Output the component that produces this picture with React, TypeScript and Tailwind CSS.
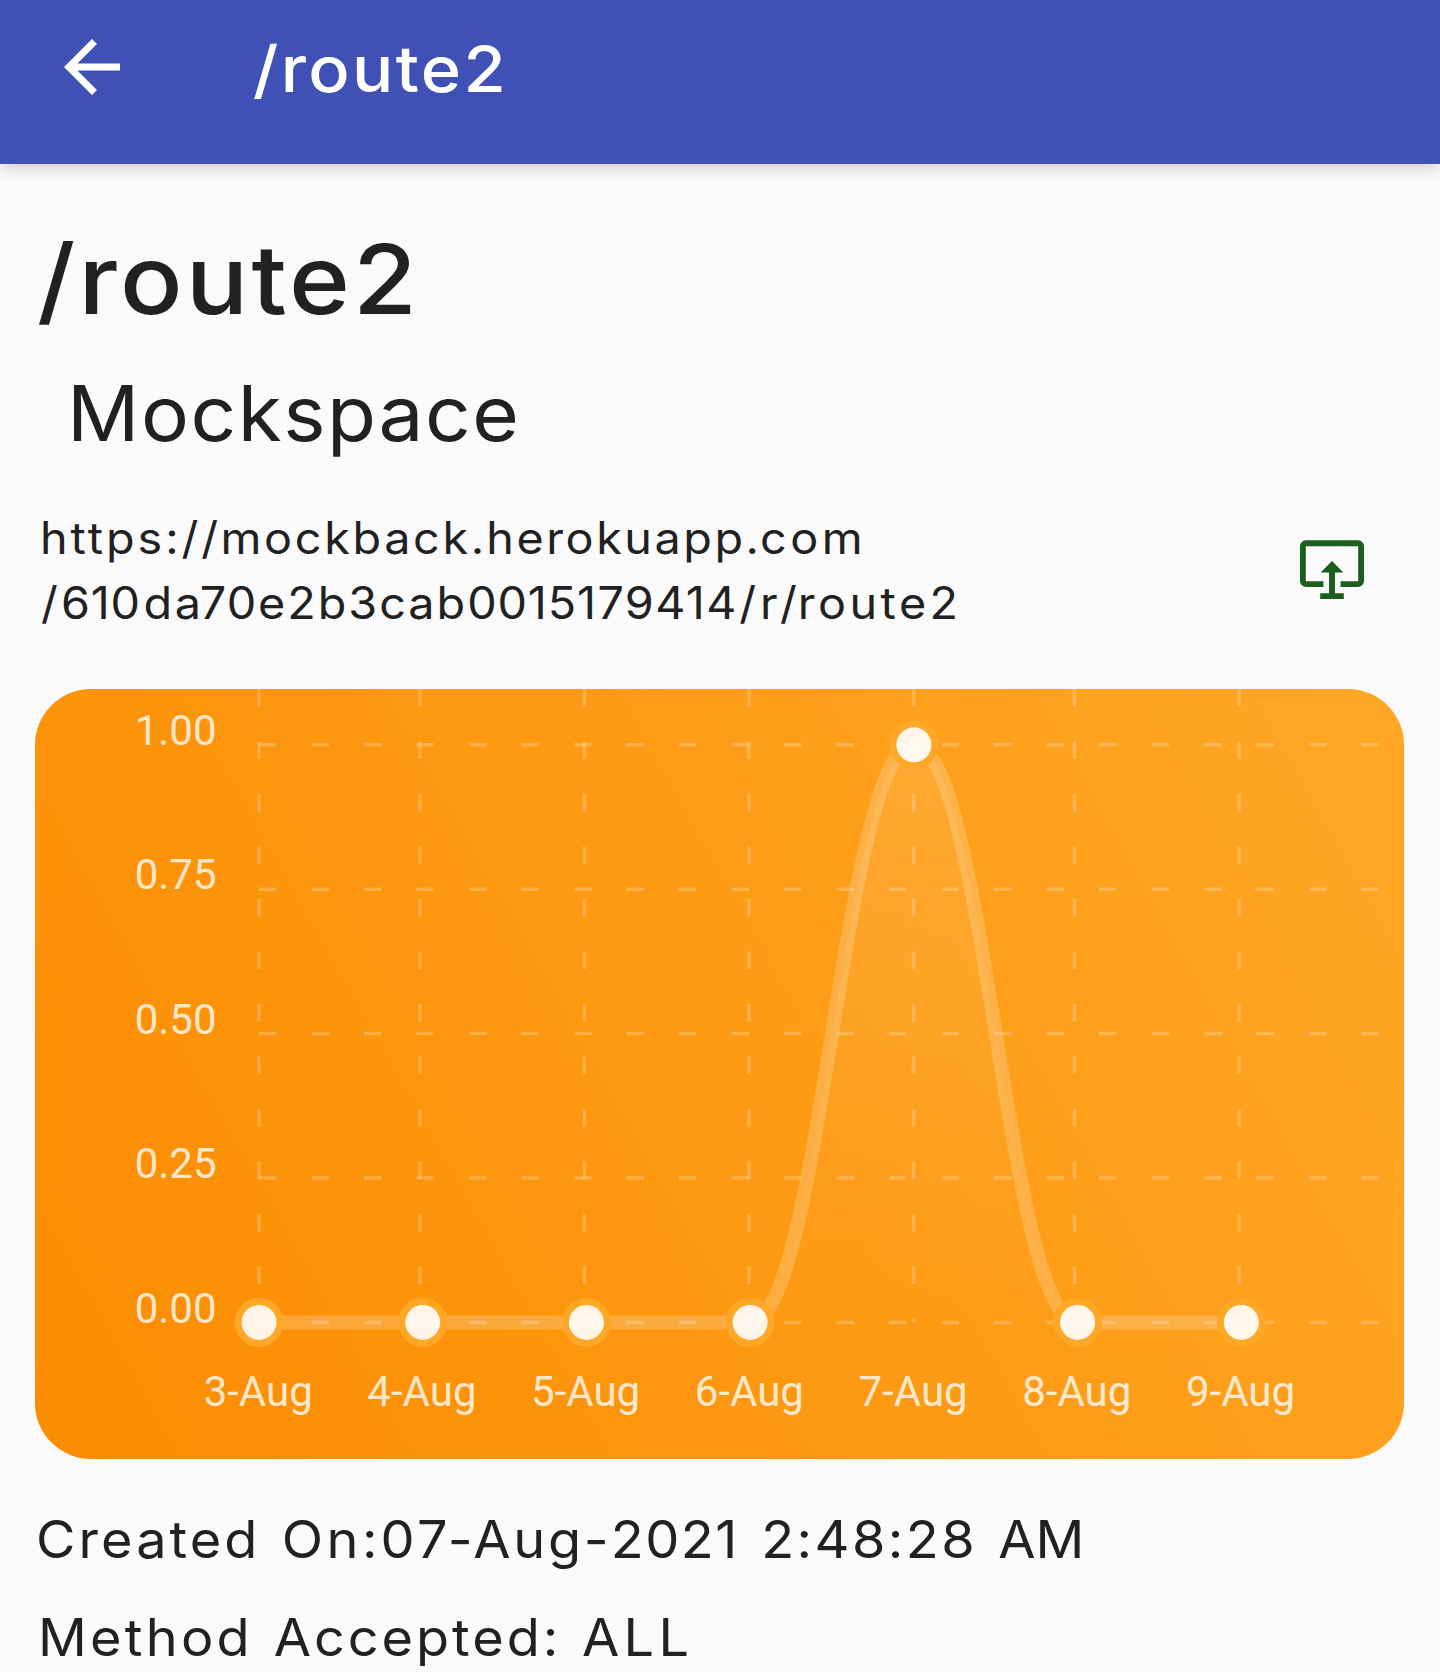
import React from "react";

const X0 = 259;
const STEP_X = 163.72;
const Y0 = 1322.4;
const Y1 = 744.8;

const days = ["3-Aug", "4-Aug", "5-Aug", "6-Aug", "7-Aug", "8-Aug", "9-Aug"];
const hits = [0, 0, 0, 0, 1, 0, 0];
const ticks = [1, 0.75, 0.5, 0.25, 0];
const gridX = [259, 420, 584.5, 749, 913.5, 1074.5, 1239];

const px = (i: number) => X0 + i * STEP_X;
const py = (v: number) => Y0 + (Y1 - Y0) * v;

/** Horizontal tangents at every point keep the curve from overshooting. */
function curvePath() {
  const c = STEP_X * 0.434;
  return hits
    .map((v, i) =>
      i === 0
        ? `M${px(0)} ${py(v)}`
        : `C${px(i - 1) + c} ${py(hits[i - 1])} ${px(i) - c} ${py(v)} ${px(i)} ${py(v)}`,
    )
    .join("");
}

function BackArrow() {
  return (
    <svg className="size-[84px] shrink-0" viewBox="0 0 24 24" fill="#fff">
      <path d="M20 11H7.83l5.59-5.59L12 4l-8 8 8 8 1.41-1.41L7.83 13H20v-2z" />
    </svg>
  );
}

function ShareScreenIcon() {
  return (
    <svg className="h-[59px] w-[64px] shrink-0" viewBox="0 0 64 59" fill="#1b5e20">
      <path d="M6 0.3H58A6 6 0 0 1 64 6.3V41A6 6 0 0 1 58 47H40.6V41.2H58.2V6.2H5.8V41.2H23.4V47H6A6 6 0 0 1 0 41V6.3A6 6 0 0 1 6 0.3Z" />
      <path d="M32 21L43.4 32.4H35V53.2H43.8V59H20.2V53.2H29V32.4H20.6Z" />
    </svg>
  );
}

function HitsChart() {
  const line = curvePath();
  return (
    <div className="h-[770px] w-[1369px] overflow-hidden rounded-[56px] bg-[linear-gradient(60.65deg,#fb8c00,#ffa726)]">
      <svg className="block h-full w-full" viewBox="35 689 1369 770" fill="none">
        <defs>
          <linearGradient id="area" gradientUnits="userSpaceOnUse" x1="0" y1={Y1} x2="0" y2={Y0}>
            <stop offset="0" stopColor="#fff" stopOpacity="0.1" />
            <stop offset="1" stopColor="#fff" stopOpacity="0" />
          </linearGradient>
        </defs>
        <g stroke="#fff" strokeOpacity="0.22" strokeWidth="3.5" strokeDasharray="17.5 35">
          {ticks.map((t) => (
            <path key={t} d={`M259 ${py(t)}H1385`} />
          ))}
          {gridX.map((x) => (
            <path key={x} d={`M${x} 689V${Y0}`} />
          ))}
        </g>
        <path d={`${line}Z`} fill="url(#area)" />
        <path d={line} stroke="#fff" strokeOpacity="0.2" strokeWidth="14" />
        {hits.map((v, i) => (
          <g key={i}>
            <circle cx={px(i)} cy={py(v)} r="21" stroke="#ffa726" strokeWidth="7" />
            <circle cx={px(i)} cy={py(v)} r="17.5" fill="#fff" fillOpacity="0.9" />
          </g>
        ))}
        <g className="font-[Roboto,sans-serif] text-[42px]" fill="#fff" fillOpacity="0.8">
          {ticks.map((t) => (
            <text key={t} x="134.7" y={py(t) + 0.2}>
              {t.toFixed(2)}
            </text>
          ))}
          {days.map((d, i) => (
            <text key={d} x={px(i) - 0.8} y="1406" textAnchor="middle">
              {d}
            </text>
          ))}
        </g>
      </svg>
    </div>
  );
}

export default function App() {
  return (
    <div className="flex h-[1672px] w-[1440px] flex-col overflow-hidden bg-[#fafafa] font-[Inter,sans-serif] whitespace-pre text-[#212121]">
      <header className="flex h-[164px] shrink-0 items-start bg-[#3f51b5] pl-[50px] text-white shadow-[0_5px_14px_rgba(0,0,0,0.16)]">
        <div className="pt-[25px]">
          <BackArrow />
        </div>
        <div className="ml-[119px] origin-left scale-x-[1.08] pt-[29px] text-[63.5px] leading-[80px] font-medium tracking-[2.2px]">
          /route2
        </div>
      </header>

      <main className="flex flex-col">
        <h1 className="mt-[57px] ml-[37px] origin-left scale-x-[1.08] text-[96px] leading-[116px] font-medium tracking-[3px]">
          /route2
        </h1>
        <h2 className="mt-[30px] ml-[66.7px] origin-left scale-x-[1.05] text-[76.3px] leading-[92px] tracking-[1.46px]">
          Mockspace
        </h2>

        <section className="mt-[47px] flex justify-between pr-[76px] text-[44.5px] leading-[65px]">
          <div>
            <div className="ml-[40.3px] origin-left scale-x-[1.05]">
              <span className="tracking-[2.82px]">https://</span>
              <span className="-ml-[0.6px] tracking-[2.53px]">mockback.</span>
              <span className="-ml-[0.5px] tracking-[2.42px]">herokuapp.</span>
              <span className="-ml-[1.6px] tracking-[3.4px]">com</span>
            </div>
            <div className="ml-[41px] origin-left scale-x-[1.05]">
              <span className="tracking-[3.1px]">/</span>
              <span className="tracking-[0.67px]">610</span>
              <span className="ml-[2.8px] tracking-[2.5px]">da</span>
              <span className="-ml-[3.9px] tracking-[1.3px]">70</span>
              <span className="ml-[0.4px] tracking-[1.9px]">e2b3cab</span>
              <span className="tracking-[0.84px]">0015</span>
              <span className="tracking-[1.32px]">179414</span>
              <span className="ml-[1.3px] tracking-[3.85px]">/r/</span>
              <span className="-ml-[3.1px] tracking-[3.3px]">route2</span>
            </div>
          </div>
          <div className="pt-[34px]">
            <ShareScreenIcon />
          </div>
        </section>

        <section className="mt-[53px] ml-[35px]">
          <HitsChart />
        </section>

        <section className="mt-[50px] flex flex-col gap-[38px] text-[51.5px] leading-[60px]">
          <div className="ml-[36.4px] origin-left scale-x-[1.05] self-start">
            <span className="tracking-[2.9px]">Created </span>
            <span className="ml-[2.8px] tracking-[3.4px]">On:</span>
            <span className="-ml-[0.7px] tracking-[3.3px]">07</span>
            <span className="-ml-[3.3px] tracking-[2.5px]">-Aug-</span>
            <span className="-ml-[0.5px] tracking-[1.47px]">2021 </span>
            <span className="ml-[5.3px] tracking-[2.3px]">2:48:28 </span>
            <span className="ml-[3.3px]">AM</span>
          </div>
          <div className="ml-[37.6px] origin-left scale-x-[1.05] self-start">
            <span className="tracking-[3.06px]">Method </span>
            <span className="ml-[2.3px] tracking-[2.8px]">Accepted: </span>
            <span className="ml-[2.4px] tracking-[4.1px]">ALL</span>
          </div>
        </section>
      </main>
    </div>
  );
}
